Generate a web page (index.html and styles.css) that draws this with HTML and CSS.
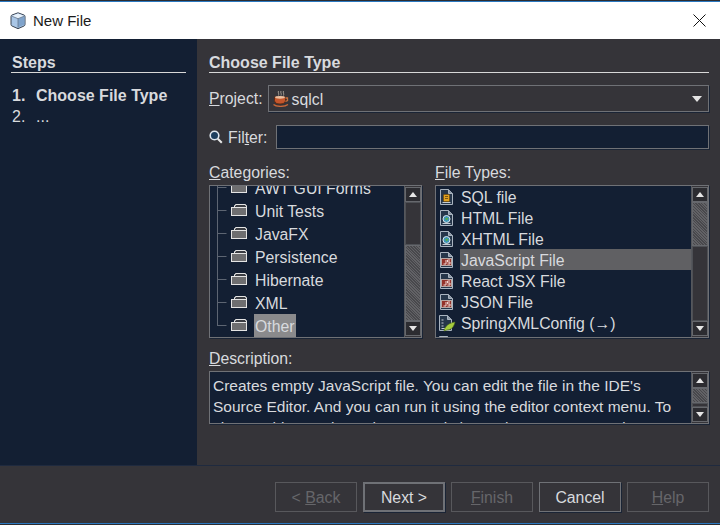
FILE: index.html
```html
<!DOCTYPE html>
<html>
<head>
<meta charset="UTF-8">
<title>New File</title>
<link rel="stylesheet" href="styles.css">
</head>
<body>
<svg class="defs">
  <symbol id="folder" viewBox="0 0 17 14">
    <path d="M.5 4.500h3v-2h1v-1h10v1h1v2" fill="#3a3c42" stroke="#e4e4e4"/>
    <rect x=".5" y="4.500" width="15" height="8" fill="#6e6e70" stroke="#e4e4e4"/>
  </symbol>
  <symbol id="doc" viewBox="0 0 16 18">
    <path d="M1.500 1.500h8l4 4v11h-12z" fill="#26364a" stroke="#aab4c0"/>
    <path d="M9.500 1.500v4h4" fill="#8b97a5" stroke="#aab4c0"/>
    <path d="M3.500 14.500h8" stroke="#c4ccd4"/>
  </symbol>
  <symbol id="ic-sql" viewBox="0 0 16 18">
    <use href="#doc" width="16" height="18"/>
    <rect x="4.500" y="6.500" width="6" height="7" rx="1" fill="#e2a11f" stroke="#7a5512"/>
    <path d="M6 8.500h3M6 10.500h3" stroke="#7a5512"/>
  </symbol>
  <symbol id="ic-web" viewBox="0 0 16 18">
    <use href="#doc" width="16" height="18"/>
    <circle cx="7.500" cy="10" r="3.500" fill="#3f94b8" stroke="#dbe8ee"/>
    <path d="M6 9.500l2-1 1.500 1-2 2z" fill="#58b04a"/>
  </symbol>
  <symbol id="ic-js" viewBox="0 0 16 18">
    <use href="#doc" width="16" height="18"/>
    <rect x="2.500" y="7.500" width="10" height="7" fill="#93322a" stroke="#b8a8a4"/>
    <path d="M7 9v4H4.500M11 9H8.500v2H11v2H8.500" fill="none" stroke="#f1d6d2"/>
  </symbol>
  <symbol id="ic-spring" viewBox="0 0 18 18">
    <use href="#doc" width="16" height="18"/>
    <path d="M3.500 6h2M3.500 9h2M3.500 12h2" stroke="#c8ced4"/>
    <path d="M6 17c1-5 5-8 11-9-1 5-4 8-8 8z" fill="#a6cc3e" stroke="#4f6e18" stroke-width=".6"/>
  </symbol>
</svg>

<div class="window">
  <div class="edge"></div>
  <div class="titlebar">
    <svg class="app-icon" viewBox="0 0 16 17">
      <path d="M8 .8l6 2.200q1 .4 1 1.500v8q0 1-1 1.500l-6 2.700-6-2.700q-1-.5-1-1.500v-8q0-1.100 1-1.500z" fill="#a9c6e6" stroke="#3c4654"/>
      <path d="M1.500 4L8 6.500 14.500 4 8 1.500z" fill="#e6f0fa"/>
      <path d="M8 7v8.500l6.500-3V4.200z" fill="#7fa3cb"/>
      <path d="M1.500 4L8 6.700 14.500 4M8 6.700v9" fill="none" stroke="#5c6c80" stroke-width=".7"/>
    </svg>
    <span class="title">New File</span>
    <svg class="close" viewBox="0 0 13 13"><path d="M.5.5l12 12M12.500.5l-12 12" stroke="#111" fill="none"/></svg>
  </div>

  <div class="main">
    <div class="steps">
      <div class="steps-head">Steps</div>
      <div class="step current"><span class="num">1.</span>Choose File Type</div>
      <div class="step"><span class="num">2.</span>...</div>
    </div>

    <div class="panel">
      <div class="panel-head">Choose File Type</div>

      <div class="project-row">
        <label class="row-label"><u>P</u>roject:</label>
        <div class="combo">
          <svg class="cup" viewBox="0 0 16 16">
            <path d="M5.500 0c-1 1.500 1 2.500 0 4.500M8 0c-1 1.500 1 2.500 0 4.500M10.500 0c-1 1.500 1 2.500 0 4.500" stroke="#9c968e" fill="none"/>
            <path d="M1.500 6h11v3.500c0 2.500-2.500 3.500-5.500 3.500s-5.500-1-5.500-3.500z" fill="#c4562c" stroke="#5e2a14"/>
            <path d="M12.500 7h2v2.500l-2 1" fill="none" stroke="#c8703c" stroke-width="1.300"/>
            <path d="M.5 13.500c3 2.500 11 2.500 14.500 0" stroke="#c9683a" stroke-width="1.300" fill="none"/>
            <ellipse cx="7" cy="6.300" rx="5" ry="1.400" fill="#ecc0a0"/>
          </svg>
          <span class="combo-text">sqlcl</span>
          <span class="combo-arrow"></span>
        </div>
      </div>

      <div class="filter-row">
        <svg class="search" viewBox="0 0 14 14">
          <circle cx="5.500" cy="5.500" r="4.300" fill="#1d3e5e" stroke="#dfe6ee" stroke-width="1.600"/>
          <path d="M8.800 8.800l4 4" stroke="#e8e8e8" stroke-width="2"/>
        </svg>
        <label class="row-label">Fil<u>t</u>er:</label>
        <div class="filter-input"></div>
      </div>

      <div class="pickers">
        <div class="picker">
          <label class="field-label"><u>C</u>ategories:</label>
          <div class="box">
            <div class="tree">
              <div class="tree-row"><svg class="branch"><path d="M.5 0v23M.5 11.500h9" stroke="#5d6572"/></svg><svg class="folder"><use href="#folder"/></svg><span>AWT GUI Forms</span></div>
              <div class="tree-row"><svg class="branch"><path d="M.5 0v23M.5 11.500h9" stroke="#5d6572"/></svg><svg class="folder"><use href="#folder"/></svg><span>Unit Tests</span></div>
              <div class="tree-row"><svg class="branch"><path d="M.5 0v23M.5 11.500h9" stroke="#5d6572"/></svg><svg class="folder"><use href="#folder"/></svg><span>JavaFX</span></div>
              <div class="tree-row"><svg class="branch"><path d="M.5 0v23M.5 11.500h9" stroke="#5d6572"/></svg><svg class="folder"><use href="#folder"/></svg><span>Persistence</span></div>
              <div class="tree-row"><svg class="branch"><path d="M.5 0v23M.5 11.500h9" stroke="#5d6572"/></svg><svg class="folder"><use href="#folder"/></svg><span>Hibernate</span></div>
              <div class="tree-row"><svg class="branch"><path d="M.5 0v23M.5 11.500h9" stroke="#5d6572"/></svg><svg class="folder"><use href="#folder"/></svg><span>XML</span></div>
              <div class="tree-row"><svg class="branch"><path d="M.5 0v12M.5 11.500h9" stroke="#5d6572"/></svg><svg class="folder"><use href="#folder"/></svg><span class="sel-tree">Other</span></div>
            </div>
            <div class="scrollbar">
              <div class="sb-btn"><span class="tri up"></span></div>
              <div class="sb-track"></div>
              <div class="sb-thumb thumb-cat"></div>
              <div class="sb-btn"><span class="tri down"></span></div>
            </div>
          </div>
        </div>

        <div class="picker">
          <label class="field-label"><u>F</u>ile Types:</label>
          <div class="box">
            <div class="list">
              <div class="list-row"><svg class="file-icon"><use href="#ic-sql"/></svg><span>SQL file</span></div>
              <div class="list-row"><svg class="file-icon"><use href="#ic-web"/></svg><span>HTML File</span></div>
              <div class="list-row"><svg class="file-icon"><use href="#ic-web"/></svg><span>XHTML File</span></div>
              <div class="list-row"><svg class="file-icon"><use href="#ic-js"/></svg><span class="sel-list">JavaScript File</span></div>
              <div class="list-row"><svg class="file-icon"><use href="#ic-js"/></svg><span>React JSX File</span></div>
              <div class="list-row"><svg class="file-icon"><use href="#ic-js"/></svg><span>JSON File</span></div>
              <div class="list-row"><svg class="file-icon"><use href="#ic-spring"/></svg><span>SpringXMLConfig (→)</span></div>
              <div class="list-row"><svg class="file-icon"><use href="#ic-spring"/></svg><span></span></div>
            </div>
            <div class="scrollbar">
              <div class="sb-btn"><span class="tri up"></span></div>
              <div class="sb-thumb thumb-type"></div>
              <div class="sb-track"></div>
              <div class="sb-btn"><span class="tri down"></span></div>
            </div>
          </div>
        </div>
      </div>

      <label class="field-label desc-label"><u>D</u>escription:</label>
      <div class="box desc-box">
        <div class="desc-text">Creates empty JavaScript file. You can edit the file in the IDE's<br>Source Editor. And you can run it using the editor context menu. To<br>change this template, choose Tools | Template Manager and</div>
        <div class="scrollbar">
          <div class="sb-btn"><span class="tri up"></span></div>
          <div class="sb-thumb thumb-desc"></div>
          <div class="sb-track"></div>
          <div class="sb-btn"><span class="tri down"></span></div>
        </div>
      </div>
    </div>
  </div>

  <div class="footer">
    <div class="btn off">&lt; <u>B</u>ack</div>
    <div class="btn default">Next &gt;</div>
    <div class="btn off"><u>F</u>inish</div>
    <div class="btn">Cancel</div>
    <div class="btn off"><u>H</u>elp</div>
  </div>
  <div class="edge-bottom"></div>
</div>
</body>
</html>
```

FILE: styles.css
```css
html, body {
  margin: 0;
  padding: 0;
  background: #353439;
}

.defs {
  display: block;
  width: 0;
  height: 0;
}

.window {
  width: 720px;
  height: 525px;
  display: flex;
  flex-direction: column;
  overflow: hidden;
  font-family: "Liberation Sans", Arial, sans-serif;
  font-size: 15.8px;
  color: #d8dade;
}

.edge {
  height: 2px;
  box-sizing: border-box;
  border-top: 1px solid #2c2c30;
  background: #2a78c0;
}

.titlebar {
  height: 37px;
  background: #fff;
  display: flex;
  align-items: center;
  padding: 0 14px 0 10px;
  color: #1a1a1a;
  font-size: 15px;
}

.app-icon {
  width: 16px;
  height: 17px;
}

.title {
  margin-left: 7px;
  flex: 1;
}

.close {
  width: 13px;
  height: 13px;
}

.main {
  height: 426px;
  display: flex;
}

.steps {
  width: 197px;
  background: #131f33;
  padding: 0 11px;
  box-sizing: border-box;
}

.steps-head, .panel-head {
  font-size: 16px;
  font-weight: bold;
  height: 34px;
  box-sizing: border-box;
  padding: 15px 1px 0;
  line-height: 18px;
  border-bottom: 1px solid #d8d8d8;
}

.panel-head {
  padding-left: 0;
}

.steps-head {
  margin-bottom: 12px;
}

.step {
  display: flex;
  height: 21px;
  line-height: 21px;
  padding-left: 1px;
  font-size: 16px;
}

.step.current {
  font-weight: bold;
}

.num {
  width: 24px;
}

.panel {
  flex: 1;
  padding: 0 11px 0 12px;
  display: flex;
  flex-direction: column;
}

.project-row {
  display: flex;
  align-items: center;
  margin-top: 12px;
  height: 27px;
}

.row-label {
  margin-right: 5px;
  padding-top: 1px;
}

.combo {
  flex: 1;
  height: 27px;
  box-sizing: border-box;
  border: 1px solid #6f7176;
  box-shadow: 1px 1px 0 #1a2435;
  display: flex;
  align-items: center;
  padding-left: 4px;
}

.combo-text {
  padding-top: 2px;
}

.cup {
  width: 16px;
  height: 16px;
  margin-right: 3px;
}

.combo-arrow {
  margin-left: auto;
  margin-right: 6px;
  border-left: 5px solid transparent;
  border-right: 5px solid transparent;
  border-top: 6px solid #e4e4e4;
}

.filter-row {
  display: flex;
  align-items: center;
  margin-top: 13px;
  height: 24px;
}

.search {
  width: 14px;
  height: 14px;
  margin-right: 5px;
}

.filter-input {
  flex: 1;
  height: 24px;
  box-sizing: border-box;
  background: #131f33;
  border: 1px solid #6f7176;
  box-shadow: 1px 1px 0 #1a2435;
  margin-left: 3px;
}

.pickers {
  display: flex;
  gap: 13px;
  margin-top: 15px;
}

.picker {
  display: flex;
  flex-direction: column;
}

.picker:first-child {
  width: 213px;
}

.picker:last-child {
  flex: 1;
}

.field-label {
  height: 21px;
  line-height: 18px;
}

.box {
  height: 153px;
  box-sizing: border-box;
  background: #131f33;
  border: 1px solid #6f7176;
  box-shadow: 1px 1px 0 #1a2435;
  display: flex;
  overflow: hidden;
}

.tree {
  flex: 1;
  display: flex;
  flex-direction: column;
  justify-content: flex-end;
  overflow: hidden;
}

.tree-row {
  flex: none;
  height: 23px;
  display: flex;
  align-items: center;
  padding-left: 7px;
}

.branch {
  width: 14px;
  height: 23px;
}

.folder {
  width: 17px;
  height: 14px;
  margin: 0 7px 2px 0;
}

.tree-row span {
  line-height: 23px;
  padding-top: 1px;
}

.sel-tree {
  background: #8a8a8c;
  padding: 0 1px;
  margin-left: -1px;
}

.list {
  flex: 1;
  overflow: hidden;
  min-width: 0;
}

.list-row {
  height: 21px;
  display: flex;
  align-items: center;
  padding-left: 2px;
}

.file-icon {
  width: 18px;
  height: 18px;
  margin-right: 4px;
  flex: none;
}

.list-row span {
  flex: 1;
  height: 21px;
  line-height: 23px;
  padding-left: 1px;
}

.sel-list {
  background: #606063;
}

.scrollbar {
  width: 17px;
  flex: none;
  display: flex;
  flex-direction: column;
  padding: 1px 0;
  box-sizing: border-box;
  border-left: 1px solid #55575c;
  background: #353439;
}

.sb-btn {
  height: 15px;
  flex: none;
  display: flex;
  align-items: center;
  justify-content: center;
  background: #2c2c31;
  border: 1px solid #66686d;
  box-sizing: border-box;
}

.tri {
  border-left: 4px solid transparent;
  border-right: 4px solid transparent;
}

.tri.up {
  border-bottom: 5px solid #e6e6e6;
}

.tri.down {
  border-top: 5px solid #e6e6e6;
}

.sb-track {
  flex: 1;
  border: 1px solid #4e5055;
}

.sb-thumb {
  flex: none;
  box-sizing: border-box;
  border: 1px solid #66686d;
  background: repeating-linear-gradient(45deg, #626266 0 1px, #48484c 1px 2px);
}

.thumb-cat {
  height: 76px;
}

.thumb-type {
  height: 44px;
}

.thumb-desc {
  height: 15px;
}

.desc-label {
  margin-top: 12px;
}

.desc-box {
  height: 53px;
}

.desc-text {
  flex: 1;
  padding: 3px 3px 0;
  line-height: 21px;
  font-size: 15.5px;
  white-space: nowrap;
  overflow: hidden;
}

.footer {
  height: 58px;
  box-sizing: border-box;
  border-top: 1px solid #1f2a3f;
  padding: 16px 11px 0 0;
  display: flex;
  justify-content: flex-end;
  gap: 6px;
}

.btn {
  width: 82px;
  height: 30px;
  box-sizing: border-box;
  border: 1px solid #6f7176;
  box-shadow: 1px 1px 0 #1a2435;
  display: flex;
  align-items: center;
  justify-content: center;
  padding-top: 2px;
  white-space: pre;
}

.btn.default {
  border: 2px solid #6f7176;
}

.btn.off {
  color: #66666a;
  border-color: #58585c;
  box-shadow: none;
}

.edge-bottom {
  height: 2px;
  box-sizing: border-box;
  border-bottom: 1px solid #2c2c30;
  background: #2a78c0;
}
```
